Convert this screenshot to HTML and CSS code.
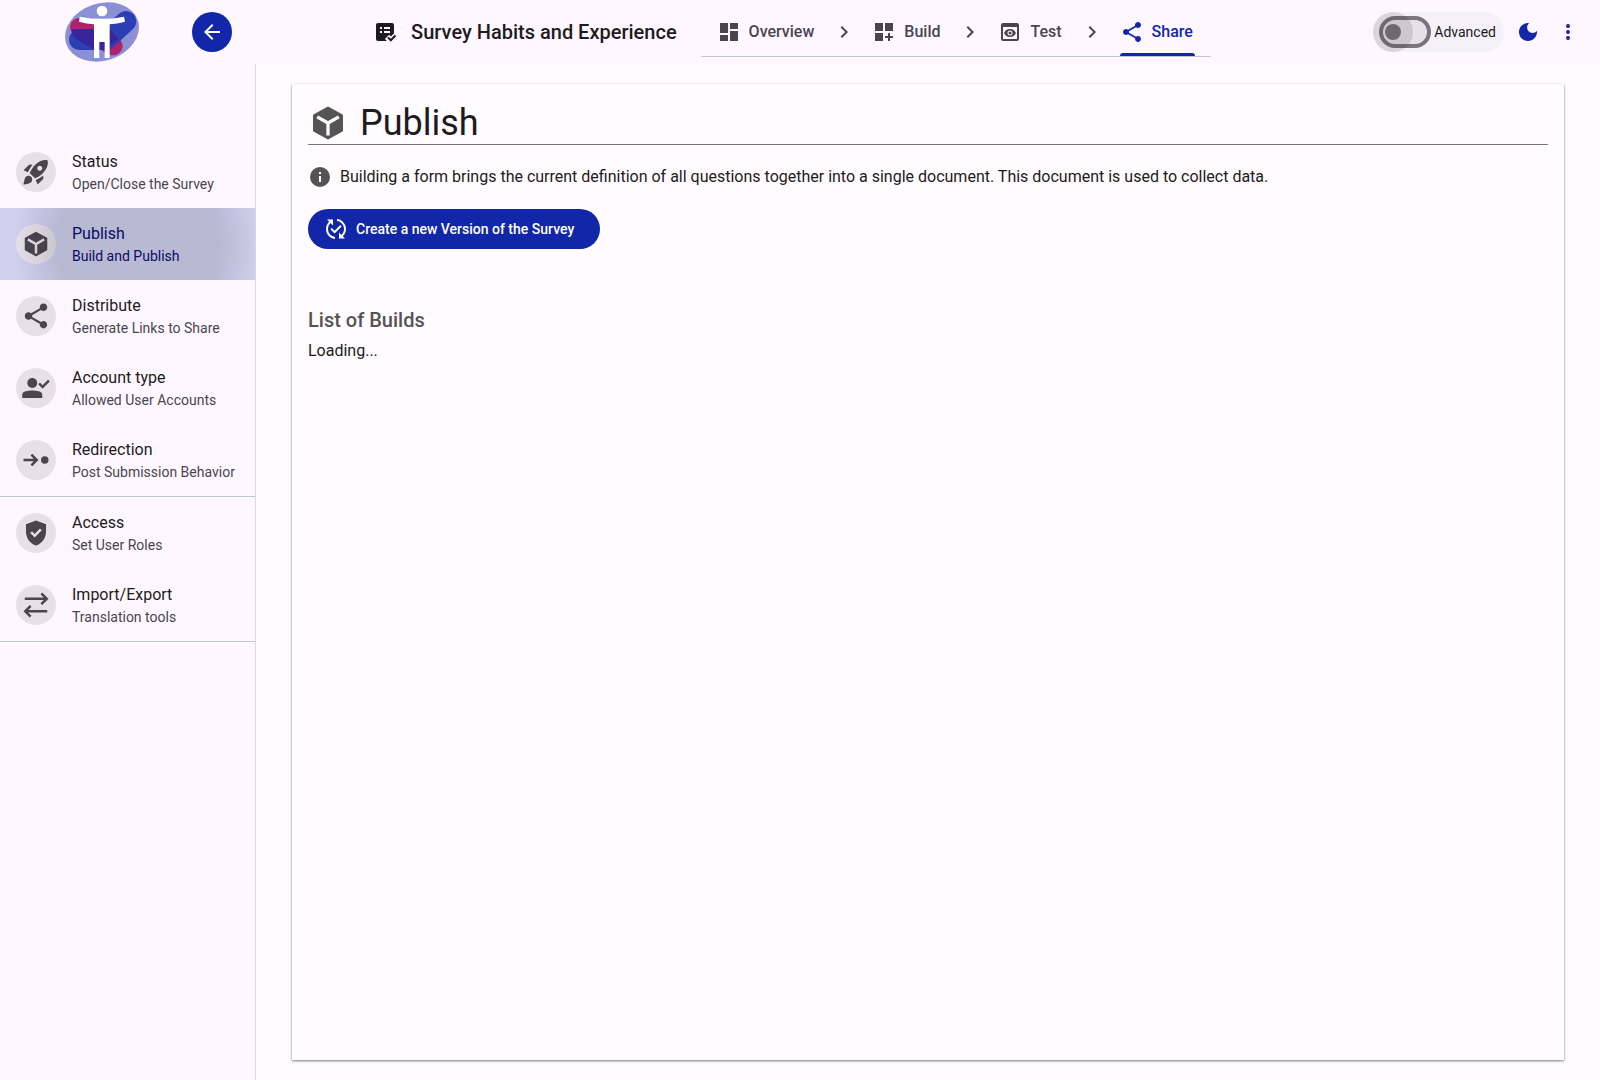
FILE: index.html
```html
<!DOCTYPE html>
<html lang="en">
<head>
  <meta charset="UTF-8">
  <meta name="viewport" content="width=device-width, initial-scale=1">
  <title>Survey Habits and Experience - Publish</title>
  <link rel="stylesheet" href="styles.css">
</head>
<body>

  <header class="topbar">
    <div class="brand">
      <svg class="logo" viewBox="45 3 222 186" aria-label="Logo">
        <ellipse cx="156" cy="96" rx="113" ry="86" transform="rotate(-18 156 96)" fill="#8a90d4"/>
        <path d="M88 82L190 138" stroke="#b0226c" stroke-width="56" stroke-linecap="round"/>
        <path d="M88 119H168L228 64" stroke="#2c3eb4" stroke-width="62" stroke-linecap="round" stroke-linejoin="round" fill="none"/>
        <path d="M66 88H180L204 116L186 132L164 150H134L74 114Q64 104 66 88Z" fill="#38259a"/>
        <circle cx="156" cy="33" r="16" fill="#fff"/>
        <path d="M89 50Q156 63 222 50L225 65Q202 71 179 73V174H164V126H148V174H132V73Q110 71 87 65Z" fill="#fff"/>
      </svg>
      <button class="back-btn" aria-label="Back">
        <svg class="icon" viewBox="0 0 24 24"><path d="M20 11H7.83l5.59-5.59L12 4l-8 8 8 8 1.41-1.41L7.83 13H20v-2z"/></svg>
      </button>
    </div>

    <div class="survey">
      <svg class="icon" viewBox="0 0 24 24"><path fill-rule="evenodd" d="M5 3h14a2 2 0 0 1 2 2v8.500l-3.100 3.100-1.800-1.800-4.200 4.200 2 2H5a2 2 0 0 1-2-2V5c0-1.100.9-2 2-2zm2 4v2h2V7zm4 0v2h6V7zm-4 4v2h2v-2zm4 0v2h6v-2z"/><path d="M17.800 21.700l-3.600-3.600 1.400-1.400 2.200 2.100 4-4 1.400 1.400z"/></svg>
      <h2>Survey Habits and Experience</h2>
      <nav class="tabs">
        <a href="#overview"><svg class="icon" viewBox="0 0 24 24"><path d="M3 13h8V3H3v10zm0 8h8v-6H3v6zm10 0h8V11h-8v10zm0-18v6h8V3h-8z"/></svg>Overview</a>
        <svg class="icon" viewBox="0 0 24 24"><path d="M10 6L8.590 7.410 13.170 12l-4.580 4.590L10 18l6-6z"/></svg>
        <a href="#build"><svg class="icon" viewBox="0 0 24 24"><path d="M3 3h8v8H3zm10 0h8v8h-8zM3 13h8v8H3zm15 0h-2v3h-3v2h3v3h2v-3h3v-2h-3z"/></svg>Build</a>
        <svg class="icon" viewBox="0 0 24 24"><path d="M10 6L8.590 7.410 13.170 12l-4.580 4.590L10 18l6-6z"/></svg>
        <a href="#test"><svg class="icon" viewBox="0 0 24 24"><path fill-rule="evenodd" d="M19 3H5a2 2 0 0 0-2 2v14a2 2 0 0 0 2 2h14a2 2 0 0 0 2-2V5a2 2 0 0 0-2-2zm0 16H5V7h14z"/><path fill-rule="evenodd" d="M12 9c-2.730 0-5.060 1.660-6 4 .94 2.340 3.270 4 6 4s5.060-1.660 6-4c-.94-2.340-3.270-4-6-4zm0 6.500a2.500 2.500 0 1 1 0-5 2.500 2.500 0 0 1 0 5z"/><circle cx="12" cy="13" r="1.500"/></svg>Test</a>
        <svg class="icon" viewBox="0 0 24 24"><path d="M10 6L8.590 7.410 13.170 12l-4.580 4.590L10 18l6-6z"/></svg>
        <a href="#share" class="active"><svg class="icon" viewBox="0 0 24 24"><path d="M18 16.080c-.76 0-1.440.3-1.960.77L8.910 12.700c.05-.23.09-.46.09-.7s-.04-.47-.09-.7l7.050-4.110c.54.5 1.250.81 2.040.81 1.660 0 3-1.340 3-3s-1.340-3-3-3-3 1.340-3 3c0 .24.04.47.09.7L8.040 9.810C7.500 9.310 6.790 9 6 9c-1.660 0-3 1.340-3 3s1.340 3 3 3c.79 0 1.500-.31 2.040-.81l7.120 4.160c-.05.21-.08.43-.08.65 0 1.610 1.310 2.920 2.920 2.920s2.920-1.310 2.920-2.920-1.310-2.920-2.920-2.920z"/></svg>Share</a>
      </nav>
    </div>

    <div class="actions">
      <label class="advanced">
        <input type="checkbox" role="switch">
        Advanced
      </label>
      <button class="icon-btn" aria-label="Dark mode">
        <svg class="icon" viewBox="0 0 24 24"><path d="M12 3c-4.970 0-9 4.030-9 9s4.030 9 9 9 9-4.030 9-9c0-.46-.04-.92-.1-1.360-.98 1.370-2.580 2.260-4.400 2.260-2.980 0-5.400-2.420-5.400-5.400 0-1.810.89-3.420 2.260-4.400-.44-.06-.9-.1-1.360-.1z"/></svg>
      </button>
      <button class="icon-btn" aria-label="More options">
        <svg class="icon" viewBox="0 0 24 24"><circle cx="12" cy="6" r="2"/><circle cx="12" cy="12" r="2"/><circle cx="12" cy="18" r="2"/></svg>
      </button>
    </div>
  </header>

  <div class="layout">
    <nav class="sidebar">
      <a href="#status" class="item">
        <span class="avatar"><svg class="icon" viewBox="0 0 24 24"><path d="M9.190 6.350c-2.040 2.290-3.440 5.580-3.570 5.890L2 10.690l4.050-4.050c.47-.47 1.150-.68 1.810-.55l1.330.26zM11.170 17s3.740-1.550 5.890-3.700c5.400-5.400 4.500-9.620 4.210-10.570-.95-.3-5.170-1.190-10.570 4.210C8.550 9.090 7 12.830 7 12.830L11.170 17zm6.480-2.190c-2.290 2.040-5.580 3.440-5.890 3.570L13.310 22l4.050-4.050c.47-.47.68-1.150.55-1.810l-.26-1.330zM9 18c0 .83-.34 1.580-.88 2.120C6.940 21.300 2 22 2 22s.7-4.940 1.880-6.120C4.420 15.340 5.170 15 6 15c1.660 0 3 1.340 3 3zm4-9c0-1.100.9-2 2-2s2 .9 2 2-.9 2-2 2-2-.9-2-2z" fill-rule="evenodd"/></svg></span>
        <span class="text"><b>Status</b><small>Open/Close the Survey</small></span>
      </a>
      <a href="#publish" class="item selected">
        <span class="avatar"><svg class="icon" viewBox="0 0 24 24"><path d="M12 2.100l8.500 4.700q.5.300.5.900v8.600q0 .6-.5.900L12 21.900l-8.500-4.700q-.5-.3-.5-.9V7.700q0-.6.500-.9z"/><path class="edges" d="M5.500 8.300L12 12l6.500-3.700M12 12v7.500"/></svg></span>
        <span class="text"><b>Publish</b><small>Build and Publish</small></span>
      </a>
      <a href="#distribute" class="item">
        <span class="avatar"><svg class="icon" viewBox="0 0 24 24"><path d="M18 16.080c-.76 0-1.440.3-1.960.77L8.910 12.700c.05-.23.09-.46.09-.7s-.04-.47-.09-.7l7.050-4.110c.54.5 1.250.81 2.040.81 1.660 0 3-1.340 3-3s-1.340-3-3-3-3 1.340-3 3c0 .24.04.47.09.7L8.040 9.810C7.500 9.310 6.790 9 6 9c-1.660 0-3 1.340-3 3s1.340 3 3 3c.79 0 1.500-.31 2.040-.81l7.120 4.160c-.05.21-.08.43-.08.65 0 1.610 1.310 2.920 2.920 2.920s2.920-1.310 2.920-2.920-1.310-2.920-2.920-2.920z"/></svg></span>
        <span class="text"><b>Distribute</b><small>Generate Links to Share</small></span>
      </a>
      <a href="#account" class="item">
        <span class="avatar"><svg class="icon" viewBox="0 0 24 24"><circle cx="9" cy="8" r="4"/><path d="M1 20v-2.800C1 14.600 5.500 14 9 14s8 .6 8 3.200V20zM17.200 12.500l-3.400-3.500 1.400-1.400 2 2.100 4.400-4.400L23 6.700z"/></svg></span>
        <span class="text"><b>Account type</b><small>Allowed User Accounts</small></span>
      </a>
      <a href="#redirection" class="item">
        <span class="avatar"><svg class="icon" viewBox="0 0 24 24"><path d="M2 11h8.200L7.600 8.400 9 7l5 5-5 5-1.400-1.400 2.600-2.600H2z"/><circle cx="19" cy="12" r="3"/></svg></span>
        <span class="text"><b>Redirection</b><small>Post Submission Behavior</small></span>
      </a>
      <hr>
      <a href="#access" class="item">
        <span class="avatar"><svg class="icon" viewBox="0 0 24 24"><path fill-rule="evenodd" d="M12 2L4 5v6.090c0 5.050 3.410 9.760 8 10.910 4.590-1.150 8-5.860 8-10.910V5l-8-3zm-1.060 13.540L7.400 12l1.410-1.410 2.120 2.120 4.240-4.240 1.410 1.410-5.640 5.660z"/></svg></span>
        <span class="text"><b>Access</b><small>Set User Roles</small></span>
      </a>
      <a href="#import-export" class="item">
        <span class="avatar"><svg class="icon" viewBox="0 0 24 24"><path d="M22 7l-5-5-1.400 1.400L18.200 6H3v2h15.200l-2.600 2.600L17 12zM2 17l5 5 1.400-1.400L5.800 18H21v-2H5.800l2.600-2.600L7 12z"/></svg></span>
        <span class="text"><b>Import/Export</b><small>Translation tools</small></span>
      </a>
      <hr>
    </nav>

    <main class="card">
      <h1>
        <svg class="icon" viewBox="0 0 24 24"><path d="M12 2.100l8.500 4.700q.5.300.5.900v8.600q0 .6-.5.900L12 21.900l-8.500-4.700q-.5-.3-.5-.9V7.700q0-.6.500-.9z"/><path class="edges" d="M5.500 8.300L12 12l6.500-3.700M12 12v7.500"/></svg>
        Publish
      </h1>
      <p class="info">
        <svg class="icon" viewBox="0 0 24 24"><path fill-rule="evenodd" d="M12 2a10 10 0 1 0 0 20 10 10 0 0 0 0-20zm1 15h-2v-6h2zm0-8h-2V7h2z"/></svg>
        Building a form brings the current definition of all questions together into a single document. This document is used to collect data.
      </p>
      <button class="create-btn">
        <svg class="icon" viewBox="0 0 24 24"><path d="M17.660 9.530l-7.070 7.070-4.240-4.240 1.410-1.410 2.830 2.830 5.660-5.660 1.410 1.410zM4 12c0-2.330 1.020-4.420 2.620-5.880L9 8.500v-6H3l2.200 2.200C3.240 6.520 2 9.110 2 12c0 5.190 3.950 9.450 9 9.950v-2.020c-3.940-.49-7-3.860-7-7.930zm18 0c0-5.190-3.950-9.450-9-9.950v2.020c3.940.49 7 3.860 7 7.930 0 2.330-1.020 4.420-2.620 5.880L15 15.500v6h6l-2.200-2.200c1.960-1.820 3.200-4.410 3.200-7.300z"/></svg>
        Create a new Version of the Survey
      </button>
      <h3>List of Builds</h3>
      <p class="loading">Loading...</p>
    </main>
  </div>

</body>
</html>
```
FILE: styles.css
```css
* {
  box-sizing: border-box;
}

body {
  margin: 0;
  min-height: 100vh;
  display: flex;
  flex-direction: column;
  font-family: Roboto, "Liberation Sans", sans-serif;
  font-size: 16px;
  line-height: 24px;
  color: #1d1b20;
  background-color: #fffbff;
}

a {
  color: inherit;
  text-decoration: none;
}

button {
  font-family: inherit;
  border: none;
  cursor: pointer;
}

.icon {
  width: 24px;
  height: 24px;
  flex-shrink: 0;
  fill: currentColor;
}

.icon .edges {
  fill: none;
  stroke: #fffbff;
  stroke-width: 2;
}

/* top bar */

.topbar {
  display: grid;
  grid-template-columns: 256px 1fr 272px;
  align-items: center;
  height: 64px;
  background-color: #fef7ff;
}

.brand {
  display: flex;
  align-items: center;
  justify-content: space-between;
  padding: 0 24px 0 65px;
}

.logo {
  width: 74px;
  height: 62px;
}

.back-btn {
  display: flex;
  align-items: center;
  justify-content: center;
  width: 40px;
  height: 40px;
  padding: 0;
  border-radius: 50%;
  color: white;
  background-color: #1226aa;
}

.survey {
  display: flex;
  align-items: center;
  justify-content: center;
}

.survey h2 {
  margin: 0 24px 0 14px;
  font-size: 20px;
  font-weight: 500;
  white-space: nowrap;
}

.tabs {
  display: flex;
  align-items: center;
  height: 50px;
  border-bottom: 1px solid #bec8c8;
  color: #49454f;
}

.tabs a {
  position: relative;
  display: flex;
  align-items: center;
  gap: 8px;
  height: 100%;
  padding: 0 18px 0 16px;
  font-weight: 500;
}

.tabs .active {
  color: #1226aa;
}

.tabs .active::after {
  content: "";
  position: absolute;
  left: 16px;
  right: 16px;
  bottom: 0;
  height: 3px;
  border-radius: 3px 3px 0 0;
  background-color: #1226aa;
}

.actions {
  display: flex;
  align-items: center;
  justify-content: flex-end;
  padding-right: 12px;
}

.advanced {
  display: flex;
  align-items: center;
  gap: 3px;
  height: 40px;
  margin-right: 4px;
  padding: 0 8px 0 6px;
  border-radius: 20px;
  font-size: 14px;
  background-color: #f5f1f8;
}

.advanced input {
  appearance: none;
  position: relative;
  width: 52px;
  height: 32px;
  margin: 0;
  border: 4px solid #79747e;
  border-radius: 16px;
  background-color: #e6e0e9;
}

.advanced input::before {
  content: "";
  position: absolute;
  top: 4px;
  left: 2px;
  width: 16px;
  height: 16px;
  border-radius: 50%;
  background-color: #79747e;
}

.advanced input::after {
  content: "";
  position: absolute;
  top: -8px;
  left: -10px;
  width: 40px;
  height: 40px;
  border-radius: 50%;
  background-color: rgba(29, 27, 32, 0.12);
}

.icon-btn {
  display: flex;
  align-items: center;
  justify-content: center;
  width: 40px;
  height: 40px;
  padding: 0;
  color: #1226aa;
  background: none;
}

/* side menu */

.layout {
  display: flex;
  flex: 1;
}

.sidebar {
  width: 256px;
  flex-shrink: 0;
  padding-top: 72px;
  border-right: 1px solid #ddd6df;
  background-color: #fef7ff;
}

.sidebar hr {
  margin: 0;
  border: none;
  border-top: 1px solid #bec8c8;
}

.item {
  position: relative;
  display: flex;
  align-items: center;
  gap: 16px;
  height: 72px;
  padding: 0 16px;
}

.avatar {
  display: flex;
  align-items: center;
  justify-content: center;
  width: 40px;
  height: 40px;
  border-radius: 50%;
  color: #49454f;
  background-color: #e6e0e9;
}

.avatar .icon {
  width: 30px;
  height: 30px;
}

.avatar .edges {
  stroke: #e6e0e9;
}

.text {
  display: flex;
  flex-direction: column;
  white-space: nowrap;
}

.text b {
  font-weight: 400;
}

.text small {
  font-size: 14px;
  line-height: 20px;
  color: #49454f;
}

.selected {
  background-color: #cfd1ee;
}

.selected .text,
.selected .text small {
  color: #06096e;
}

/* press ripple */
.selected::after {
  content: "";
  position: absolute;
  inset: 0;
  background: radial-gradient(circle 125px at 138px 36px, rgba(29, 27, 32, 0.13) 65%, transparent 100%);
}

/* content */

.card {
  flex: 1;
  margin: 20px 36px;
  padding: 16px;
  background-color: #fffbff;
  box-shadow: 0 1px 2px rgba(0, 0, 0, 0.4), 0 1px 3px rgba(0, 0, 0, 0.15);
}

.card .icon {
  color: #545454;
}

.card h1 {
  display: flex;
  align-items: center;
  gap: 12px;
  margin: 0 0 20px;
  padding-top: 2px;
  border-bottom: 1px solid #79747e;
  font-size: 36px;
  font-weight: 400;
  line-height: 42px;
}

.card h1 .icon {
  width: 40px;
  height: 40px;
}

.info {
  display: flex;
  align-items: center;
  gap: 8px;
  margin: 0 0 20px;
}

.create-btn {
  display: flex;
  align-items: center;
  gap: 8px;
  height: 40px;
  padding: 0 26px 0 16px;
  border-radius: 20px;
  font-size: 14px;
  font-weight: 500;
  color: white;
  background-color: #1226aa;
}

.create-btn .icon {
  color: white;
}

.card h3 {
  margin: 60px 0 8px;
  font-size: 20px;
  font-weight: 500;
  line-height: 22px;
  color: #545454;
}

.loading {
  margin: 0;
}
```
